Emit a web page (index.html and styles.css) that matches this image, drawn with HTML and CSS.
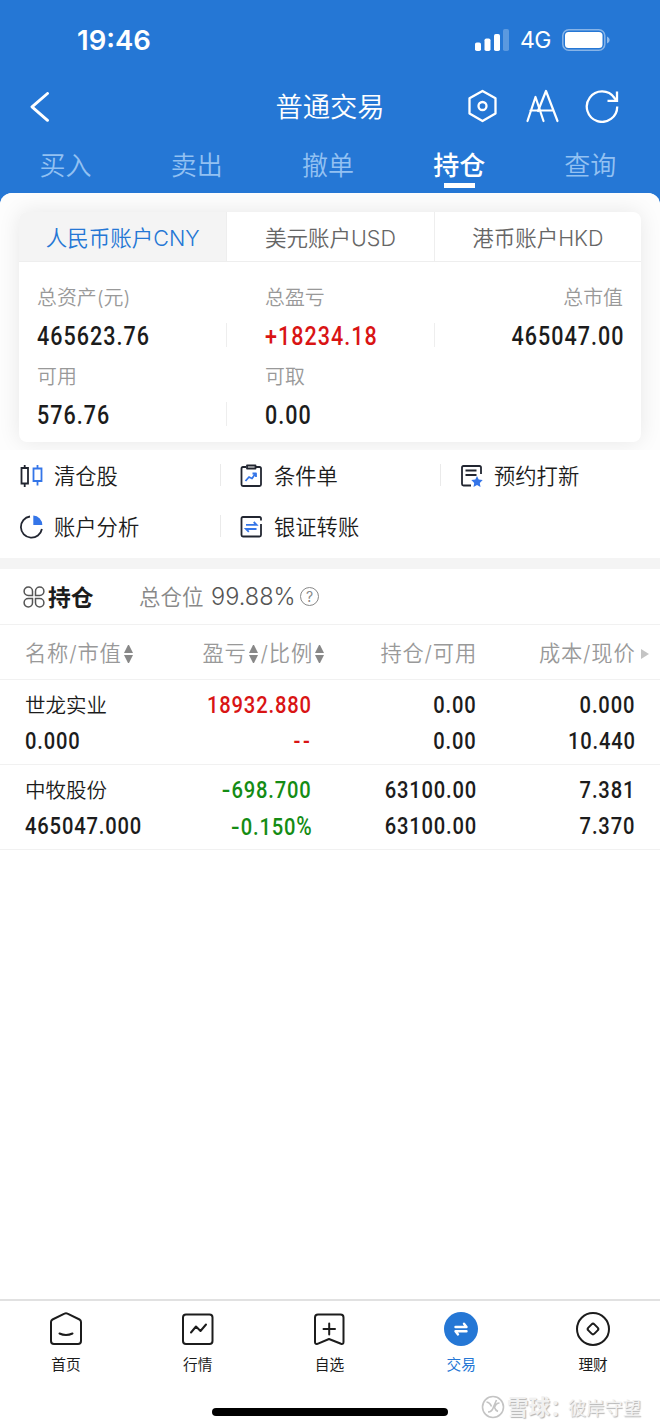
FILE: index.html
```html
<!DOCTYPE html>
<html lang="zh-CN">
<head>
<meta charset="utf-8">
<title>普通交易</title>
<link rel="stylesheet" href="styles.css">
</head>
<body>
<div class="app">
  <header class="header">
    <div class="status">
      <span class="time">19:46</span>
      <svg class="signal" width="34" height="22" viewBox="0 0 34 22" fill="#fff"><rect x="0" y="13.500" width="6" height="8.500" rx="1.800"/><rect x="9.500" y="9.500" width="6" height="12.500" rx="1.800"/><rect x="19" y="5" width="6" height="17" rx="1.800"/><rect x="28" y="0" width="6" height="22" rx="1.800" opacity=".25"/></svg>
      <span class="net">4G</span>
      <svg class="battery" width="48" height="22" viewBox="0 0 48 22"><rect x=".8" y=".8" width="42" height="20.400" rx="6" fill="none" stroke="#fff" stroke-opacity=".45" stroke-width="1.500"/><rect x="3" y="3" width="37.500" height="16" rx="3.500" fill="#fff"/><path d="M45 7.500q2.700 1 2.700 3.500t-2.700 3.500z" fill="#fff" opacity=".5"/></svg>
    </div>
    <div class="titlebar">
      <svg class="back" width="20" height="31" viewBox="0 0 20 31" fill="none" stroke="#fff" stroke-width="2.900" stroke-linecap="round" stroke-linejoin="round"><path d="M17.500 1.500 2 14.800l15.500 13.500"/></svg>
      <h1>普通交易</h1>
      <div class="tools">
        <svg width="32" height="34" viewBox="0 0 32 34" fill="none" stroke="#fff" stroke-width="2.300" stroke-linejoin="round"><path d="M15.500 2 28.500 9.300v15.200L15.500 32 2.500 24.500V9.300z"/><circle cx="15.500" cy="17" r="4"/></svg>
        <svg width="34" height="34" viewBox="0 0 34 34" fill="none" stroke="#fff" stroke-width="2.200" stroke-linecap="round" stroke-linejoin="round"><path d="M2.500 32 10.500 8l8 24M5.500 21.500h9"/><path d="M13 22 21 2 32.500 32M15.500 21.500h13"/></svg>
        <svg width="34" height="34" viewBox="0 0 34 34" fill="none" stroke="#fff" stroke-width="2.300"><path d="M32.200 17.500A15.200 15.200 0 1 1 29.500 9l1.500 2"/><path d="M32 2.500v9.300h-9.500"/></svg>
      </div>
    </div>
    <nav class="tabs"><span>买入</span><span>卖出</span><span>撤单</span><span class="on">持仓</span><span>查询</span></nav>
  </header>

  <main class="sheet">
    <section class="account-area">
      <div class="card">
        <div class="currencies"><span class="on">人民币账户CNY</span><span>美元账户USD</span><span>港币账户HKD</span></div>
        <div class="stats">
          <div class="stat rule"><label>总资产(元)</label><b class="num">465623.76</b></div>
          <div class="stat rule"><label>总盈亏</label><b class="num red">+18234.18</b></div>
          <div class="stat end"><label>总市值</label><b class="num">465047.00</b></div>
          <div class="stat rule"><label>可用</label><b class="num">576.76</b></div>
          <div class="stat"><label>可取</label><b class="num">0.00</b></div>
        </div>
      </div>
    </section>

    <section class="links">
      <a class="rule"><svg width="24" height="24" viewBox="0 0 24 24" fill="none" stroke="#222631" stroke-width="1.800"><path d="M2.500 4h6.500v15.500H2.500zM5.700 1v3M5.700 19.500V23"/><path stroke="#3475e8" d="M14.500 4.500h8v12.500h-8zM18.500 1v3.500M18.500 17v4.500"/></svg>清仓股</a>
      <a class="rule"><svg width="24" height="24" viewBox="0 0 24 24" fill="none" stroke="#222631" stroke-width="1.800" stroke-linejoin="round"><path d="M7 3H4Q2.500 3 2.500 4.500v16Q2.500 22 4 22h16.500q1.500 0 1.500-1.500v-16Q22 3 20.500 3H17"/><path d="M8 1.500h8.500v3H8z"/><path stroke="#3475e8" d="m6.500 17 3.500-4 3 1.500 3.500-5M13.500 9.500h3.500v3.500"/></svg>条件单</a>
      <a><svg width="24" height="24" viewBox="0 0 24 24" fill="none" stroke="#222631" stroke-width="1.800"><path d="M22 10V3.500Q22 2 20.500 2H4.500Q3 2 3 3.500v16.500Q3 21.500 4.500 21.500H12M6.500 6.500h11M6.500 11h11"/><path fill="#3475e8" stroke="none" d="m18 12 1.700 3.600 4 .5-2.900 2.800.7 4-3.500-1.900-3.500 1.900.7-4-2.900-2.800 4-.5z"/></svg>预约打新</a>
      <a class="rule"><svg width="24" height="24" viewBox="0 0 24 24" fill="none" stroke="#222631" stroke-width="1.800"><path d="M11 1.500A10.600 10.600 0 1 0 22.900 14"/><path fill="#3475e8" stroke="none" d="M14.300.5a9.500 9.500 0 0 1 9 9.500h-9z"/></svg>账户分析</a>
      <a><svg width="24" height="24" viewBox="0 0 24 24" fill="none" stroke="#222631" stroke-width="1.800"><path d="M22 5.500v-2Q22 2 20.500 2H4Q2.500 2 2.500 3.500v16.500Q2.500 21.500 4 21.500h16.500q1.500 0 1.500-1.500V9"/><path stroke="#3475e8" d="M7 9.800h10.500l-2.800-2.800M17.500 14h-10.500l2.800 2.800"/></svg>银证转账</a>
    </section>

    <section class="holding">
      <svg class="clover" width="22" height="22" viewBox="0 0 22 22" fill="none" stroke="#555" stroke-width="1.500"><path d="M9.500 9.500V5.300A4.200 4.200 0 1 0 5.300 9.500zM12.500 9.500V5.300A4.200 4.200 0 1 1 16.700 9.500zM9.500 12.500v4.200A4.200 4.200 0 1 1 5.300 12.500zM12.500 12.500v4.200a4.200 4.200 0 1 0 4.200-4.200z"/></svg>
      <h2>持仓</h2><span class="ratio-label">总仓位</span><span class="ratio">99.88%</span>
      <span class="help">?</span>
    </section>

    <section class="table">
      <div class="row head">
        <span>名称/市值<i class="sort"></i></span>
        <span class="profit">盈亏<i class="sort"></i>/比例<i class="sort"></i></span>
        <span>持仓/可用</span>
        <span class="cost">成本/现价<i class="more"></i></span>
      </div>
      <div class="row">
        <div><span class="name">世龙实业</span><b class="num">0.000</b></div>
        <div class="red"><b class="num">18932.880</b><b class="num dashes">--</b></div>
        <div><b class="num">0.00</b><b class="num">0.00</b></div>
        <div><b class="num">0.000</b><b class="num">10.440</b></div>
      </div>
      <div class="row">
        <div><span class="name">中牧股份</span><b class="num">465047.000</b></div>
        <div class="green"><b class="num"><i class="minus">-</i>698.700</b><b class="num"><i class="minus">-</i>0.150<i class="pct">%</i></b></div>
        <div><b class="num">63100.00</b><b class="num">63100.00</b></div>
        <div><b class="num">7.381</b><b class="num">7.370</b></div>
      </div>
    </section>
  </main>

  <footer class="bottom">
    <nav class="dock">
      <a><svg width="36" height="36" viewBox="0 0 36 36" fill="none" stroke="#1c1c1c" stroke-width="2" stroke-linejoin="round" stroke-linecap="round"><path d="M16.500 2.700q1.500-.8 3 0L31.500 8.500q1.500.8 1.500 2.500v19q0 3-3 3H6q-3 0-3-3V11q0-1.700 1.500-2.500z"/><path d="M11.500 22.500q6.500 3 13 0"/></svg>首页</a>
      <a><svg width="36" height="36" viewBox="0 0 36 36" fill="none" stroke="#1c1c1c" stroke-width="2" stroke-linejoin="round" stroke-linecap="round"><rect x="3" y="3.500" width="29.500" height="29.500" rx="3"/><path d="m11 21.500 5-6 4.500 4.500 5.500-6.500"/></svg>行情</a>
      <a><svg width="36" height="36" viewBox="0 0 36 36" fill="none" stroke="#1c1c1c" stroke-width="2" stroke-linejoin="round" stroke-linecap="round"><path d="M7 3.500h22.500q3 0 3 3V31q0 2.500-2.500 1.800L18 28 6.500 32.800Q4 33.500 4 31V6.500q0-3 3-3zM12.500 18h11.500M18.200 12.500v11"/></svg>自选</a>
      <a class="on"><svg width="36" height="36" viewBox="0 0 36 36"><circle cx="18" cy="18" r="17" fill="#2577d5"/><path d="M12.500 16h11l-2.500-3.200M23.500 20.200h-11l2.500 3.200" fill="none" stroke="#fff" stroke-width="2.400" stroke-linecap="round" stroke-linejoin="round"/></svg>交易</a>
      <a><svg width="36" height="36" viewBox="0 0 36 36" fill="none" stroke="#1c1c1c" stroke-width="2"><circle cx="18" cy="18" r="16"/><rect x="13.700" y="13.700" width="8.600" height="8.600" rx="2" transform="rotate(45 18 18)"/></svg>理财</a>
    </nav>
    <div class="home-line"></div>
    <div class="watermark"><svg width="24" height="24" viewBox="0 0 24 24" fill="none" stroke="#c4c4c4" stroke-width="1.600"><circle cx="12" cy="12" r="10.500"/><path d="M5.500 7q3.500.5 5 4.500M18.500 8q-3.500 0-5 4.500 1 3 3.500 4M7 17q4 0 5.500-5L15.500 5"/></svg><strong>雪球：</strong><span>彼岸守望</span></div>
  </footer>
</div>
</body>
</html>
```

FILE: styles.css
```css
* { box-sizing: border-box; }
body { margin: 0; background: #fff; color: #1c1c1c; font-family: Inter, "Noto Sans CJK SC", sans-serif; }
h1, h2 { margin: 0; }
i { font-style: normal; }
svg { display: block; flex: none; }
.app { width: 660px; height: 1428px; display: flex; flex-direction: column; overflow: hidden; background: #2577d5; }

.header { height: 193px; flex: none; color: #fff; }
.status { height: 79px; display: flex; align-items: center; padding-left: 77px; }
.time { width: 398px; font-size: 27.500px; font-weight: 600; }
.net { width: 53px; padding-left: 11px; font-size: 23px; font-weight: 400; letter-spacing: -.5px; white-space: nowrap; }
.titlebar { height: 56px; display: grid; grid-template-columns: 100px 1fr 100px; align-items: center; position: relative; }
.back { margin-left: 30px; }
h1 { text-align: center; font-size: 27.300px; font-weight: 350; line-height: 42px; padding-top: 2px; }
.tools { position: absolute; right: 41px; top: 10px; display: flex; gap: 26px; }
.tabs { height: 58px; display: grid; grid-template-columns: repeat(5, 131.200px); font-size: 26px; line-height: 62px; font-weight: 350; text-align: center; color: #93c1f2; }
.tabs .on { color: #fff; font-weight: 500; display: flex; flex-direction: column; align-items: center; height: 57px; }
.tabs .on::after { content: ""; width: 31px; height: 5px; background: #fff; margin-top: -14px; flex: none; }

.sheet { flex: 1; background: #fff; border-radius: 12px 12px 0 0; overflow: hidden; }
.account-area { height: 257px; padding: 19px 19px 0; overflow: hidden; background: #fdfdfd; }
.card { height: 230px; border-radius: 8px; background: #fff; box-shadow: 0 0 22px rgba(0, 0, 0, .09); overflow: hidden; }
.currencies { height: 50px; display: grid; grid-template-columns: repeat(3, 1fr); border-bottom: 1px solid #eee; color: #666; font-size: 21.500px; font-weight: 350; line-height: 52px; text-align: center; }
.currencies span { height: 49px; }
.currencies span + span { border-left: 1px solid #eee; }
.currencies .on { background: #f4f4f4; color: #2577d5; }
.stats { display: grid; grid-template-columns: 208px 208px 1fr; padding-top: 17px; }
.stat { height: 78.500px; padding-left: 18px; display: flex; flex-direction: column; position: relative; }
.stat + .stat { padding-left: 38px; }
.stat:nth-child(4) { padding-left: 18px; }
.stat.end { align-items: flex-end; padding-right: 18px; }
.stat.rule::after { content: ""; position: absolute; right: 0; top: 44px; width: 1px; height: 24px; background: #eee; }
label { font-size: 19.900px; font-weight: 350; line-height: 39px; color: #999; }
.num { display: block; width: max-content; font-family: Roboto, sans-serif; font-weight: 500; font-size: 25px; line-height: 38px; letter-spacing: 1.200px; transform: scaleX(.86); transform-origin: left; }
.end .num { transform-origin: right; margin-right: -1px; }
.red { color: #d91414; }
.green { color: #148c14; }

.links { height: 108px; background: #fff; display: grid; grid-template-columns: repeat(3, 220px); grid-auto-rows: 51px; }
.links a { display: flex; align-items: center; gap: 11px; padding-left: 19px; font-size: 21.300px; font-weight: 350; line-height: 50px; height: 51px; position: relative; }
.links .rule::after { content: ""; position: absolute; right: -1px; top: 14px; width: 1px; height: 22px; background: #eaeaea; }

.holding { height: 67px; border-top: 11px solid #f4f4f4; border-bottom: 1px solid #f1f1f1; display: flex; align-items: center; padding-left: 23px; line-height: 54px; }
h2 { width: 91px; margin-left: 3px; font-size: 22.800px; font-weight: 700; padding-top: 2px; }
.ratio-label { width: 72px; font-size: 21.500px; font-weight: 350; color: #888; white-space: nowrap; padding-top: 1px; }
.ratio { width: 89px; font-size: 23.500px; font-weight: 350; color: #555; padding-top: 1px; }
.help { width: 19px; height: 19px; border: 1.200px solid #888; border-radius: 50%; color: #888; font-size: 14px; line-height: 17px; text-align: center; }

.row { height: 85px; padding: 8px 0 0 25px; display: grid; grid-template-columns: 146px 140px 165px 158.500px; border-bottom: 1px solid #f1f1f1; }
.row .num { font-size: 24px; line-height: 35.500px; letter-spacing: 1px; transform: scaleX(.84); }
.row > div + div .num { transform-origin: right; margin-left: auto; margin-right: -1px; }
.row .dashes { letter-spacing: 3px; }
.minus { display: inline-block; transform: scaleX(1.250); transform-origin: right; }
.num .pct { letter-spacing: 0; font-size: 25px; }
.row.head { height: 55px; padding-top: 0; color: #999; font-size: 21.300px; line-height: 57px; font-weight: 350; letter-spacing: .8px; }
.head > span { display: flex; align-items: center; white-space: nowrap; }
.head > span + span { justify-content: flex-end; margin-right: -1px; }
.head .profit.profit { margin-right: -13px; }
.head .cost.cost { margin-right: -14px; }
.name { display: block; font-size: 20.500px; line-height: 35.500px; font-weight: 350; }
.sort { width: 9px; height: 18px; margin: 0 3px 0 2px; display: flex; flex-direction: column; justify-content: space-between; }
.head > span > .sort:last-child { margin-right: 0; }
.sort::before, .sort::after { content: ""; border: 4.500px solid transparent; }
.sort::before { border-top: 0; border-bottom: 8px solid #888; }
.sort::after { border-bottom: 0; border-top: 8px solid #888; }
.more { margin-left: 5px; border: 5.500px solid transparent; border-left: 8px solid #c4c4c4; border-right: 0; }

.bottom { height: 129px; flex: none; background: #fff; border-top: 2px solid #e1e1e1; position: relative; }
.dock { height: 80px; display: grid; grid-template-columns: repeat(5, 131.800px); padding-top: 10px; }
.dock a { display: flex; flex-direction: column; align-items: center; font-size: 14.700px; line-height: 36px; font-weight: 400; }
.dock .on { color: #2577d5; }
.home-line { width: 236px; height: 8px; margin: 27px auto 0; border-radius: 4px; background: #000; }
.watermark { position: absolute; left: 481px; top: 94px; height: 24px; display: flex; align-items: center; color: #f1f1f1; text-shadow: 1px 1px 1px #b4b4b4; white-space: nowrap; }
.watermark strong { width: 61px; margin-left: 2px; font-size: 21.500px; font-weight: 700; line-height: 24px; }
.watermark span { font-size: 18.300px; font-weight: 400; }
```
